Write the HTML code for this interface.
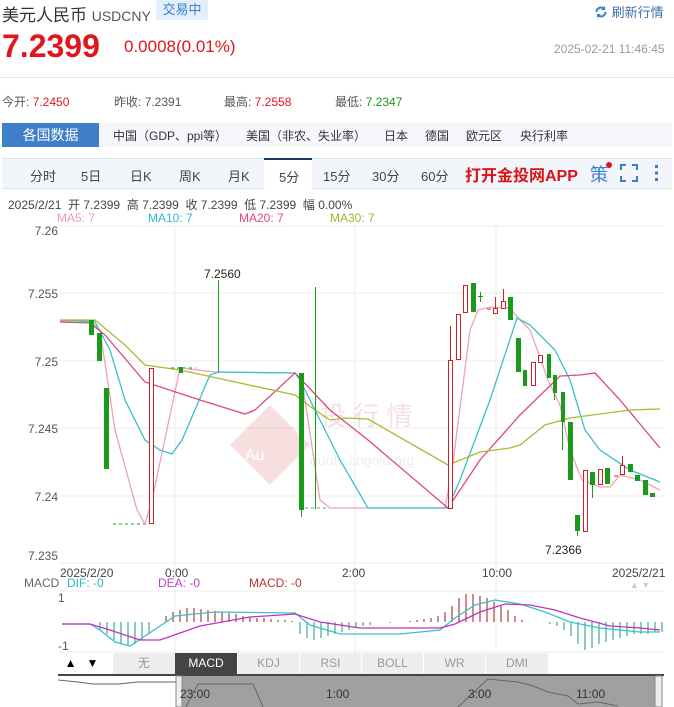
<!DOCTYPE html>
<html><head><meta charset="utf-8"><style>
*{margin:0;padding:0;box-sizing:border-box}
body{width:674px;height:707px;background:#fff;font-family:"Liberation Sans","Noto Sans CJK SC",sans-serif;position:relative;overflow:hidden;color:#333}
.a{position:absolute;white-space:nowrap}
</style></head><body>
<div class="a" style="left:2px;top:1px;font-size:17px;color:#333">美元人民币 <span style="font-size:14px;color:#555">USDCNY</span></div>
<div class="a" style="left:156px;top:0;width:52px;height:20px;background:#e3effa;color:#3a7fc8;font-size:13px;line-height:20px;text-align:center">交易中</div>
<div class="a" style="left:594px;top:2px;font-size:13px;color:#3a6fa8"><svg width="14" height="14" viewBox="0 0 14 14" style="vertical-align:-2px"><path d="M2.5 7a4.5 4.5 0 0 1 8-2.8M11.5 7a4.5 4.5 0 0 1-8 2.8" stroke="#3a7fc8" stroke-width="2" fill="none"/><path d="M11 1v4h-4z M3 13v-4h4z" fill="#3a7fc8"/></svg> 刷新行情</div>
<div class="a" style="left:2px;top:28px;font-size:32px;font-weight:bold;color:#e0161c">7.2399</div>
<div class="a" style="left:124px;top:37px;font-size:17px;color:#e0161c">0.0008(0.01%)</div>
<div class="a" style="left:554px;top:42px;font-size:12px;color:#999">2025-02-21 11:46:45</div>
<div class="a" style="left:0;top:77px;width:674px;height:1px;background:#e5e5e5"></div>
<div class="a" style="left:2px;top:93px;font-size:12px;color:#555">今开: <span style="color:#e0161c">7.2450</span></div>
<div class="a" style="left:114px;top:93px;font-size:12px;color:#555">昨收: 7.2391</div>
<div class="a" style="left:224px;top:93px;font-size:12px;color:#555">最高: <span style="color:#e0161c">7.2558</span></div>
<div class="a" style="left:335px;top:93px;font-size:12px;color:#555">最低: <span style="color:#1a9a1a">7.2347</span></div>
<div class="a" style="left:2px;top:123px;width:670px;height:24px;background:#f5f7fa"></div>
<div class="a" style="left:2px;top:123px;width:97px;height:24px;background:#3f7fc9;color:#fff;font-size:14px;line-height:24px;text-align:center">各国数据</div>
<div class="a" style="top:127px;left:113px;font-size:12px;color:#333">中国（GDP、ppi等）</div>
<div class="a" style="top:127px;left:246px;font-size:12px;color:#333">美国（非农、失业率）</div>
<div class="a" style="top:127px;left:384px;font-size:12px;color:#333">日本</div>
<div class="a" style="top:127px;left:425px;font-size:12px;color:#333">德国</div>
<div class="a" style="top:127px;left:466px;font-size:12px;color:#333">欧元区</div>
<div class="a" style="top:127px;left:520px;font-size:12px;color:#333">央行利率</div>
<div class="a" style="left:2px;top:158px;width:670px;height:31px;background:#f2f6fb;border-top:1px solid #dde6f0;border-bottom:1px solid #dde6f0"></div>
<div class="a" style="left:264px;top:158px;width:48px;height:31px;background:#fff;border-top:2px solid #1d3b66"></div>
<div class="a" style="top:166px;left:30px;font-size:13px;color:#444">分时</div>
<div class="a" style="top:166px;left:81px;font-size:13px;color:#444">5日</div>
<div class="a" style="top:166px;left:130px;font-size:13px;color:#444">日K</div>
<div class="a" style="top:166px;left:179px;font-size:13px;color:#444">周K</div>
<div class="a" style="top:166px;left:228px;font-size:13px;color:#444">月K</div>
<div class="a" style="top:167px;left:279px;font-size:13px;color:#444">5分</div>
<div class="a" style="top:166px;left:323px;font-size:13px;color:#444">15分</div>
<div class="a" style="top:166px;left:372px;font-size:13px;color:#444">30分</div>
<div class="a" style="top:166px;left:421px;font-size:13px;color:#444">60分</div>
<div class="a" style="top:162px;left:465px;font-size:16px;font-weight:bold;color:#d8141a">打开金投网APP</div>
<div class="a" style="top:161px;left:590px;font-size:18px;color:#3a7fc8">策</div>
<div class="a" style="top:162px;left:606px;width:6px;height:6px;border-radius:3px;background:#e0161c"></div>
<svg class="a" style="left:620px;top:164px" width="18" height="18"><path d="M1 6V1h5M12 1h5v5M17 12v5h-5M6 17H1v-5" stroke="#3a7fc8" stroke-width="2" fill="none"/></svg>
<svg class="a" style="left:654px;top:164px" width="6" height="18"><rect x="1" y="1" width="3" height="3" fill="#3a7fc8"/><rect x="1" y="7.5" width="3" height="3" fill="#3a7fc8"/><rect x="1" y="14" width="3" height="3" fill="#3a7fc8"/></svg>
<div class="a" style="top:196px;left:8px;font-size:12px;color:#444">2025/2/21 &nbsp;开 7.2399 &nbsp;高 7.2399 &nbsp;收 7.2399 &nbsp;低 7.2399 &nbsp;幅 0.00%</div>
<div class="a" style="top:211px;left:57px;font-size:12px;color:#f09ab8">MA5: 7</div>
<div class="a" style="top:211px;left:148px;font-size:12px;color:#2fb8c8">MA10: 7</div>
<div class="a" style="top:211px;left:239px;font-size:12px;color:#e04a80">MA20: 7</div>
<div class="a" style="top:211px;left:330px;font-size:12px;color:#9ab82a">MA30: 7</div>

<svg class="a" style="left:0;top:0" width="674" height="707" font-family="Liberation Sans, sans-serif">
<g stroke="#ebebeb" stroke-width="1">
<line x1="60" y1="226" x2="664" y2="226"/><line x1="60" y1="293" x2="664" y2="293"/><line x1="60" y1="361" x2="664" y2="361"/><line x1="60" y1="428" x2="664" y2="428"/><line x1="60" y1="496" x2="664" y2="496"/><line x1="60" y1="563" x2="664" y2="563"/>
<line x1="175" y1="226" x2="175" y2="652"/><line x1="355" y1="226" x2="355" y2="652"/><line x1="496" y1="226" x2="496" y2="652"/>
<line x1="60" y1="591" x2="664" y2="591"/><line x1="60" y1="652" x2="664" y2="652"/>
</g>
<g font-size="12" fill="#555" text-anchor="end">
<text x="58" y="235">7.26</text><text x="58" y="298">7.255</text><text x="58" y="366">7.25</text><text x="58" y="433">7.245</text><text x="58" y="501">7.24</text><text x="58" y="560">7.235</text>
</g>
<g opacity="0.15"><path d="M270 405l40 40-40 40-40-40z" fill="#d03030"/><text x="245" y="460" font-size="16" fill="#fff">Au</text><text x="320" y="425" font-size="26" fill="#c03030">投 行 情</text><text x="310" y="465" font-size="14" fill="#888">quote.cngold.org</text></g>
<g stroke-dasharray="3,3" stroke="#1a9a1a"><line x1="60" y1="320" x2="88" y2="320"/><line x1="113" y1="524" x2="146" y2="524"/><line x1="165" y1="368" x2="196" y2="368"/><line x1="305" y1="508" x2="448" y2="508" stroke="#888"/></g>
<g fill="none" stroke-width="1.3">
<path d="M60 321 L90 321 L100 330 L115 430 L137 510 L145 524 L152 500 L180 368 L215 372 L295 373 L302 380 L320 500 L330 508 L445 508 L452 470 L470 330 L478 310 L490 307 L510 308 L520 320 L530 330 L548 380 L560 405 L570 450 L582 480 L600 487 L610 487 L620 475 L640 480 L660 490" stroke="#f0a0b8"/>
<path d="M60 320 L95 322 L110 350 L125 400 L145 440 L160 450 L172 454 L182 440 L210 375 L219 372 L295 373 L300 380 L340 460 L368 508 L448 508 L460 480 L490 400 L517 318 L530 325 L555 350 L570 380 L585 430 L600 450 L630 470 L660 482" stroke="#3ac0cc"/>
<path d="M60 322 L90 323 L105 335 L145 382 L200 400 L245 414 L255 410 L295 373 L330 410 L368 440 L448 508 L480 460 L520 415 L560 376 L580 375 L595 373 L620 400 L660 448" stroke="#e0487a"/>
<path d="M60 320 L95 320 L125 345 L145 365 L180 370 L295 395 L315 410 L330 420 L345 418 L368 419 L448 465 L480 452 L510 448 L520 445 L545 425 L570 418 L600 414 L630 410 L660 409" stroke="#a8bc30"/>
</g>
<g fill="#1a9a1a" shape-rendering="crispEdges">
<rect x="89" y="320" width="5" height="15"/><rect x="97" y="333" width="5" height="28"/><rect x="104" y="388" width="5" height="81"/><rect x="179" y="367" width="4" height="6"/>
<rect x="218" y="280" width="1" height="92"/><rect x="299" y="373" width="5" height="137"/><rect x="301" y="505" width="1" height="12"/><rect x="315" y="287" width="1" height="222"/>
<rect x="471" y="283" width="5" height="29"/><rect x="480" y="292" width="1" height="10"/><rect x="478" y="296" width="5" height="1"/>
<rect x="508" y="297" width="5" height="23"/><rect x="516" y="338" width="5" height="34"/><rect x="523" y="370" width="4" height="16"/>
<rect x="547" y="354" width="4" height="24"/><rect x="553" y="375" width="4" height="18"/><rect x="554" y="390" width="1" height="10"/>
<rect x="561" y="392" width="4" height="30"/><rect x="562" y="420" width="1" height="30"/><rect x="568" y="422" width="5" height="58"/>
<rect x="575" y="515" width="5" height="16"/><rect x="577" y="528" width="1" height="8"/><rect x="590" y="472" width="5" height="13"/><rect x="592" y="483" width="1" height="15"/>
<rect x="605" y="468" width="5" height="16"/><rect x="628" y="464" width="5" height="8"/><rect x="635" y="475" width="5" height="6"/><rect x="643" y="480" width="5" height="15"/><rect x="650" y="493" width="5" height="4"/>
</g>
<g fill="#fff" stroke="#d0202a" stroke-width="1">
<rect x="149.5" y="368.5" width="4" height="155"/><rect x="448.5" y="360.5" width="4" height="148"/><line x1="450.5" y1="326" x2="450.5" y2="360"/>
<rect x="456.5" y="314.5" width="4" height="45"/><rect x="463.5" y="285.5" width="4" height="27"/><rect x="493.5" y="308.5" width="4" height="5"/><line x1="495.5" y1="297" x2="495.5" y2="308"/>
<rect x="501.5" y="301.5" width="4" height="7"/><line x1="503.5" y1="289" x2="503.5" y2="301"/><rect x="531.5" y="362.5" width="4" height="23"/><rect x="538.5" y="355.5" width="4" height="7"/>
<rect x="583.5" y="470.5" width="4" height="61"/><rect x="598.5" y="469.5" width="4" height="15"/><rect x="620.5" y="465.5" width="4" height="9"/><line x1="622.5" y1="456" x2="622.5" y2="465"/>
<line x1="487" y1="309" x2="491" y2="309"/><line x1="614" y1="476" x2="618" y2="476"/>
</g>
<text x="204" y="278" font-size="12" fill="#222">7.2560</text>
<text x="545" y="554" font-size="12" fill="#222">7.2366</text>
<g font-size="12" fill="#444"><text x="60" y="577">2025/2/20</text><text x="165" y="577">0:00</text><text x="342" y="577">2:00</text><text x="482" y="577">10:00</text><text x="612" y="577">2025/2/21</text></g>
<g font-size="12"><text x="24" y="587" fill="#666">MACD</text><text x="67" y="587" fill="#2fb8c8">DIF: -0</text><text x="158" y="587" fill="#c040c0">DEA: -0</text><text x="249" y="587" fill="#c03030">MACD: -0</text></g>
<text x="58" y="602" font-size="12" fill="#555">1</text><text x="58" y="650" font-size="12" fill="#555">-1</text>
<g stroke="#1a9a7a" stroke-width="1" shape-rendering="crispEdges">
<path d="M100 622v8M107 622v12M114 622v18M121 622v22M128 622v24M135 622v22M142 622v18M149 622v12M300 622v12M307 622v16M314 622v18M321 622v16M328 622v14M335 622v12M342 622v10M349 622v8M356 622v6M363 622v4M370 622v3M390 622v1M550 622v2M557 622v4M564 622v8M571 622v14M578 622v22M585 622v28M592 622v26M599 622v22M606 622v20M613 622v18M620 622v16M627 622v14M634 622v12M641 622v12M648 622v12M655 622v10M662 622v10"/>
</g>
<g stroke="#9a1a1a" stroke-width="1" shape-rendering="crispEdges">
<path d="M166 622v-6M173 622v-10M180 622v-12M187 622v-14M194 622v-14M201 622v-13M208 622v-12M215 622v-11M222 622v-10M229 622v-9M236 622v-8M243 622v-6M250 622v-5M257 622v-4M264 622v-4M271 622v-3M278 622v-2M285 622v-2M292 622v-1M410 622v-1M417 622v-2M424 622v-3M431 622v-4M438 622v-6M445 622v-10M452 622v-16M459 622v-24M466 622v-28M473 622v-28M480 622v-26M487 622v-24M494 622v-20M501 622v-16M508 622v-12M515 622v-6M522 622v-2"/>
</g>
<path d="M62 624 L90 624 L100 630 L115 642 L130 646 L145 636 L175 616 L215 612 L295 613 L310 625 L340 634 L400 634 L440 630 L455 618 L475 605 L495 600 L520 604 L545 612 L570 622 L600 628 L640 632 L660 632" fill="none" stroke="#3ac0cc" stroke-width="1.3"/>
<path d="M62 624 L90 624 L110 630 L140 640 L160 640 L200 626 L250 617 L295 614 L320 622 L360 628 L440 628 L455 624 L480 612 L505 604 L530 605 L555 610 L580 618 L610 626 L640 628 L660 630" fill="none" stroke="#c030c0" stroke-width="1.3"/>
<text x="630" y="588" font-size="9" fill="#ccc">▲ ▼</text>
</svg>

<div class="a" style="left:58px;top:653px;width:55px;height:21px;background:#fff;font-size:12px;line-height:21px;color:#000">&nbsp;&nbsp;▲&nbsp;&nbsp;&nbsp;▼</div>
<div class="a" style="left:113px;top:653px;width:435px;height:21px;background:#eeeeee"></div>
<div class="a" style="left:113px;top:653px;width:62px;height:21px;font-size:12px;line-height:21px;text-align:center;color:#999">无</div>
<div class="a" style="left:175px;top:653px;width:62px;height:21px;background:#444;font-size:12px;line-height:21px;text-align:center;color:#fff">MACD</div>
<div class="a" style="left:237px;top:653px;width:62px;height:21px;font-size:12px;line-height:21px;text-align:center;color:#999;border-left:1px solid #fff">KDJ</div>
<div class="a" style="left:299px;top:653px;width:62px;height:21px;font-size:12px;line-height:21px;text-align:center;color:#999;border-left:1px solid #fff">RSI</div>
<div class="a" style="left:361px;top:653px;width:62px;height:21px;font-size:12px;line-height:21px;text-align:center;color:#999;border-left:1px solid #fff">BOLL</div>
<div class="a" style="left:423px;top:653px;width:62px;height:21px;font-size:12px;line-height:21px;text-align:center;color:#999;border-left:1px solid #fff">WR</div>
<div class="a" style="left:485px;top:653px;width:63px;height:21px;font-size:12px;line-height:21px;text-align:center;color:#999;border-left:1px solid #fff">DMI</div>
<svg class="a" style="left:58px;top:674px" width="606" height="33">
<rect x="0" y="0" width="606" height="33" fill="#fff"/>
<rect x="0" y="0" width="606" height="2" fill="#444"/>
<rect x="118" y="2" width="480" height="31" fill="#a0a0a0"/>
<rect x="118" y="2" width="6" height="31" fill="#eee" stroke="#888"/><rect x="597" y="2" width="7" height="31" fill="#eee" stroke="#888"/>
<path d="M0 6 L20 8 L35 10 L60 10 L80 8 L118 8 M128 33 L140 10 L195 10 L205 33 M400 33 L430 5 L460 8 L475 12 L490 18 L510 22 L520 30 L540 28 L560 32" fill="none" stroke="#666"/>
<g font-size="12" fill="#333"><text x="122" y="24">23:00</text><text x="268" y="24">1:00</text><text x="410" y="24">3:00</text><text x="518" y="24">11:00</text></g>
</svg>
</body></html>
